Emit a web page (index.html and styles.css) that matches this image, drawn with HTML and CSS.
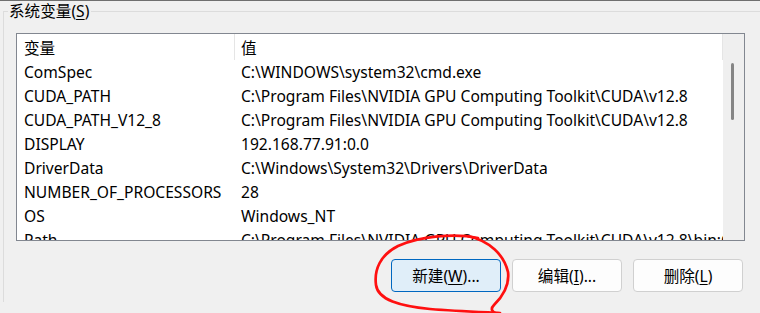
FILE: index.html
```html
<!DOCTYPE html>
<html lang="zh-CN">
<head>
	<meta charset="UTF-8">
	<title>系统变量</title>
	<link rel="stylesheet" href="styles.css">
</head>
<body>
<div class="edge"></div>
<fieldset class="group">
	<legend>系统变量(<u>S</u>)</legend>
	<div class="list">
		<div class="table">
			<div class="row head"><span class="c1">变量</span><span class="c2">值</span></div>
			<div class="row"><span class="c1">ComSpec</span><span class="c2">C:\WINDOWS\system32\cmd.exe</span></div>
			<div class="row"><span class="c1">CUDA_PATH</span><span class="c2">C:\Program Files\NVIDIA GPU Computing Toolkit\CUDA\v12.8</span></div>
			<div class="row"><span class="c1">CUDA_PATH_V12_8</span><span class="c2">C:\Program Files\NVIDIA GPU Computing Toolkit\CUDA\v12.8</span></div>
			<div class="row"><span class="c1">DISPLAY</span><span class="c2">192.168.77.91:0.0</span></div>
			<div class="row"><span class="c1">DriverData</span><span class="c2">C:\Windows\System32\Drivers\DriverData</span></div>
			<div class="row"><span class="c1">NUMBER_OF_PROCESSORS</span><span class="c2">28</span></div>
			<div class="row"><span class="c1">OS</span><span class="c2">Windows_NT</span></div>
			<div class="row"><span class="c1">Path</span><span class="c2">C:\Program Files\NVIDIA GPU Computing Toolkit\CUDA\v12.8\bin;C:\Program Files\NVIDIA GPU Computing Toolkit\CUDA\v12.8\libnvvp</span></div>
		</div>
		<div class="scroll"><div class="thumb"></div></div>
	</div>
	<div class="actions">
		<button class="btn default">新建(<u>W</u>)...</button>
		<button class="btn">编辑(<u>I</u>)...</button>
		<button class="btn">删除(<u>L</u>)</button>
	</div>
</fieldset>
<!-- hand drawn red mark around the "new" button -->
<svg class="mark" viewBox="0 0 760 313" xmlns="http://www.w3.org/2000/svg">
	<path d="M 478 238 C 455 233, 420 236, 398 246 C 380 255, 374 270, 376 285 C 378 300, 400 306, 430 309 C 455 311, 480 312, 500 313" />
	<path d="M 468 236 C 490 241, 504 255, 508 272 C 510 288, 500 299, 494 305 C 490 309, 492 312, 497 314" />
</svg>
</body>
</html>
```

FILE: styles.css
```css
body {
	margin: 0;
	height: 313px;
	overflow: hidden;
	background: #f0f0f0;
	color: #000;
	font-family: "Noto Sans", "Noto Sans CJK SC", sans-serif;
	font-size: 15.6px;
}
.edge {
	height: 1px;
	background: #6f6f6f;
}
.group {
	margin: 0 -20px 0 3px;
	padding: 0 0 10px;
	min-width: 0;
	border: 1px solid #dcdcdc;
	border-bottom: 0;
}
.group legend {
	margin-left: 4px;
	padding: 0 2px 0 1px;
	line-height: 20px;
}
u {
	text-underline-offset: 2px;
}
.list {
	display: flex;
	width: 729px;
	height: 208px;
	margin: 12px 0 0 12px;
	box-sizing: border-box;
	border: 1px solid #828790;
	background: #fff;
	overflow: hidden;
}
.table {
	flex: 1;
	min-width: 0;
}
.row {
	display: flex;
	align-items: center;
	height: 24px;
	white-space: nowrap;
}
.c1 {
	flex: none;
	width: 218px;
	padding-left: 7px;
	box-sizing: border-box;
}
.c2 {
	flex: 1;
	padding-left: 6px;
	overflow: hidden;
}
.head {
	height: 26px;
	align-items: stretch;
}
.head span {
	display: flex;
	align-items: center;
	border-right: 1px solid #e5e5e5;
}
.scroll {
	flex: none;
	width: 21px;
	background: #efefef;
}
.thumb {
	width: 3px;
	height: 57px;
	margin: 29px 0 0 8px;
	border-radius: 2px;
	background: #858585;
}
.actions {
	display: flex;
	justify-content: flex-end;
	gap: 11px;
	width: 729px;
	margin: 18px 0 0 12px;
	padding-right: 2px;
	box-sizing: border-box;
}
.btn {
	width: 110px;
	height: 33px;
	padding: 0;
	box-sizing: border-box;
	border: 1px solid #d0d0d0;
	border-radius: 4px;
	background: #fdfdfd;
	color: #000;
	font: inherit;
}
.btn.default {
	background: #e0eef9;
	border-color: #0067c0;
}
.mark {
	position: absolute;
	left: 0;
	top: 0;
	width: 760px;
	height: 313px;
	pointer-events: none;
	fill: none;
	stroke: #ff1010;
	stroke-width: 2.7;
	stroke-linecap: round;
}
```
